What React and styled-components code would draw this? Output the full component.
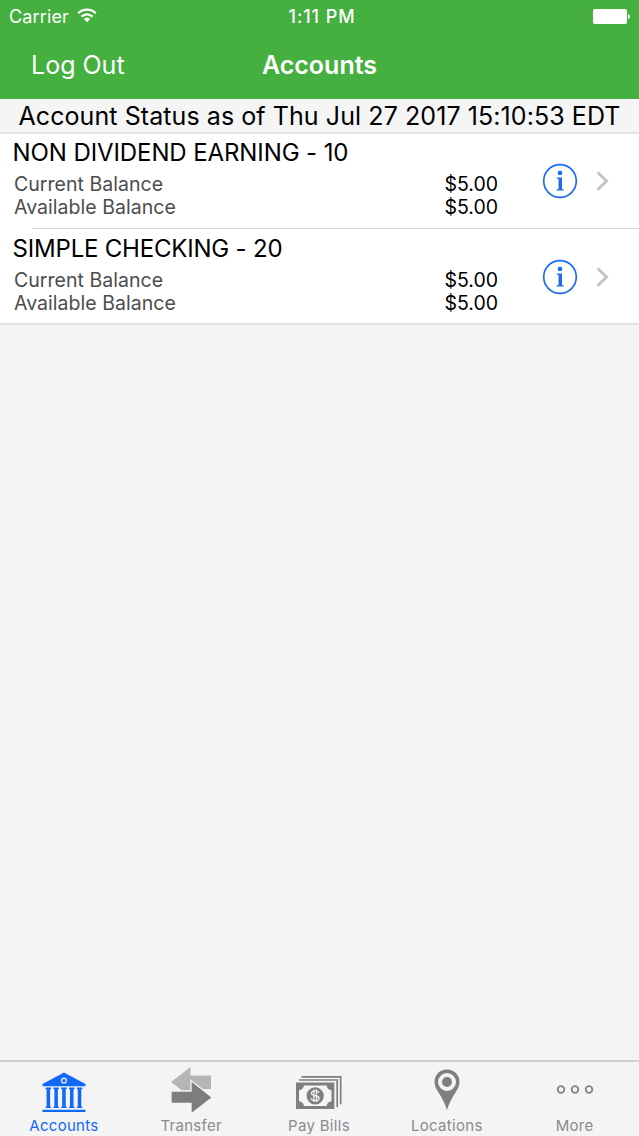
import styled, { createGlobalStyle } from "styled-components";

const GlobalStyle = createGlobalStyle`
  * {
    box-sizing: border-box;
  }
  body {
    margin: 0;
    font-family: Inter, "Liberation Sans", sans-serif;
  }
`;

const Container = styled.div`
  height: 1136px;
  width: 100%;
  display: flex;
  flex-direction: column;
  background-color: #f4f4f4;
  white-space: nowrap;
`;

const Header = styled.header`
  height: 99px;
  flex-shrink: 0;
  background-color: #45af3f;
  color: white;
`;

const StatusBar = styled.div`
  height: 32px;
  display: grid;
  grid-template-columns: 1fr auto 1fr;
  align-items: center;
  padding: 0 9px 0 9px;
  font-size: 18px;
`;

const Carrier = styled.div`
  display: flex;
  align-items: center;
  gap: 8px;
  letter-spacing: 0.15px;

  svg {
    margin-top: -2px;
  }
`;

const Time = styled.div`
  font-weight: 500;
  letter-spacing: 0.9px;
  margin-left: 5px;
`;

const Battery = styled.svg`
  justify-self: end;
`;

const NavBar = styled.div`
  height: 67px;
  display: grid;
  grid-template-columns: 1fr auto 1fr;
  align-items: center;
  padding: 0 31px 1px;
`;

const LogOut = styled.a`
  font-size: 25px;
`;

const Title = styled.h1`
  margin: 0;
  font-size: 25px;
  font-weight: 600;
`;

const AsOf = styled.div`
  height: 35px;
  display: flex;
  align-items: center;
  justify-content: center;
  padding-top: 1px;
  border-bottom: 2px solid #e4e4e5;
  background-color: #f5f5f5;
  font-size: 25px;
  letter-spacing: 0.08px;
`;

const List = styled.div`
  background-color: white;
  border-bottom: 2px solid #e1e1e3;
`;

const Row = styled.div`
  height: 95px;
  display: flex;
  padding: 5px 30px 0 12px;

  &:last-child {
    height: 94px;
    padding-top: 6px;
  }
`;

const Divider = styled.div`
  height: 1px;
  margin: -1px 0 0 32px;
  background-color: #d9d9dc;
`;

const Details = styled.div`
  width: 486px;
`;

const AccountName = styled.div`
  height: 28px;
  line-height: 28px;
  padding-left: 0.6px;
  font-size: 24px;
  letter-spacing: ${(props) => props.$spacing};
`;

const Balance = styled.div`
  display: flex;
  justify-content: space-between;
  padding-left: 2px;
  position: relative;
  top: 6px;
  height: 23px;
  line-height: 23px;
  font-size: 19.5px;
`;

const Label = styled.span`
  color: #4c4c4c;
  letter-spacing: 0.04px;
`;

const Amount = styled.span`
  color: black;
`;

const Actions = styled.div`
  flex: 1;
  height: 83px;
  display: flex;
  align-items: center;
  justify-content: flex-end;
  gap: 18px;
`;

const TabBar = styled.nav`
  height: 76px;
  margin-top: auto;
  display: grid;
  grid-template-columns: repeat(5, 1fr);
  border-top: 2px solid #d0d0d1;
  background-color: #f4f4f5;
`;

const Tab = styled.div`
  display: flex;
  flex-direction: column;
  align-items: center;
  margin-left: ${(props) => (props.$active ? "0" : "-1px")};
  color: ${(props) => (props.$active ? "#1268f5" : "#8b8b8b")};

  svg {
    display: block;
  }
`;

const TabLabel = styled.span`
  height: 18px;
  line-height: 18px;
  margin-top: 3px;
  font-size: 15px;
  letter-spacing: 0.3px;
`;

const WifiIcon = () => (
  <svg width="20" height="15" viewBox="0 0 20 15" fill="none" stroke="white">
    <path d="M1.2 5.2a12.6 12.6 0 0 1 17.6 0" strokeWidth="2.3" />
    <path d="M4.5 8.6a7.9 7.9 0 0 1 11 0" strokeWidth="2.2" />
    <path d="M10 14.2l-3.1-3.3a4.5 4.5 0 0 1 6.2 0z" fill="white" stroke="none" />
  </svg>
);

const InfoIcon = () => (
  <svg width="36" height="36" viewBox="0 0 36 36" fill="#1a6af3">
    <circle cx="18" cy="18" r="16.3" fill="none" stroke="#1a6af3" strokeWidth="1.7" />
    <circle cx="18" cy="10" r="2.3" />
    <path d="M14.7 14.5h5.3v11.6l1.7.5v1h-7.2v-1l2.1-.5V16l-1.9-.5z" />
  </svg>
);

const Chevron = () => (
  <svg width="13" height="20" viewBox="0 0 13 20" fill="none">
    <path d="M1.5 1.2L10.5 10l-9 8.8" stroke="#c3c3c6" strokeWidth="2.9" />
  </svg>
);

const BankIcon = () => (
  <svg width="44" height="52" viewBox="0 0 44 52" fill="#1268f5">
    <path d="M22 10.5L43.5 22v2.3H.5V22z" />
    <circle cx="22" cy="18.7" r="2.4" fill="none" stroke="#d5e3fa" strokeWidth="1.4" />
    {[3.6, 11.4, 19.2, 27, 34.8].map((x) => (
      <path key={x} d={`M${x} 25.600h5.500v1.300l-1 .7v16.800l1 .7V46H${x}v-.9l1-.7V27.600l-1-.7z`} />
    ))}
    <path d="M.5 47.8h43v2.2H.5z" />
  </svg>
);

const TransferIcon = () => (
  <svg width="42" height="52" viewBox="0 0 42 52">
    <path d="M1 20L20.5 5v8.5H41V27H20.5v8z" fill="#b5b5b5" />
    <path d="M1 29h20V18.5L42.5 35.5 21 52V41.5H1z" fill="#7d7d7d" stroke="#f4f4f5" strokeWidth="1.3" />
  </svg>
);

const BillsIcon = () => (
  <svg width="46" height="52" viewBox="0 0 46 52">
    <g fill="none" stroke="#7f7f7f" strokeWidth="1.7">
      <path d="M5.5 14.8h39.2v27.5" />
      <path d="M3 18h38.2v27" />
    </g>
    <path d="M0 20.5h38.3V47H0z" fill="#7f7f7f" />
    <path d="M8 23.6h22.5q.7 4.1 5 4.6v11q-4.3.5-5 4.8H8q-.7-4.3-5-4.8v-11q4.3-.5 5-4.6z" fill="#f5f5f5" />
    <circle cx="19.2" cy="33.8" r="8.6" fill="#7f7f7f" />
    <path
      d="M23 30.8c-.5-1.3-1.8-1.9-3.8-1.9-2.3 0-3.8.9-3.8 2.4 0 3.5 7.7 1.4 7.7 4.9 0 1.6-1.6 2.5-3.9 2.5-2.2 0-3.7-.8-4.1-2.3M17.9 27.5v12.6M20.5 27.5v12.6"
      fill="none"
      stroke="#f1f1f1"
      strokeWidth="1.3"
    />
  </svg>
);

const PinIcon = () => (
  <svg width="26" height="52" viewBox="0 0 26 52">
    <path
      d="M13 7.5C5.8 7.5.5 13 .5 19.8c0 4.3 2.1 7.7 4.6 11.7C8 36.2 11 41 13 48c2-7 5-11.8 7.9-16.5 2.5-4 4.6-7.4 4.6-11.7C25.5 13 20.2 7.5 13 7.5z"
      fill="#7f7f7f"
    />
    <circle cx="13" cy="20" r="7" fill="none" stroke="#f4f4f5" strokeWidth="4" />
  </svg>
);

const MoreIcon = () => (
  <svg width="38" height="52" viewBox="0 0 38 52" fill="none" stroke="#858585" strokeWidth="1.8">
    <circle cx="5" cy="27.5" r="3.3" />
    <circle cx="19" cy="27.5" r="3.3" />
    <circle cx="33" cy="27.5" r="3.3" />
  </svg>
);

const accounts = [
  { name: "NON DIVIDEND EARNING - 10", spacing: "-0.1px", current: "$5.00", available: "$5.00" },
  { name: "SIMPLE CHECKING - 20", spacing: "-0.2px", current: "$5.00", available: "$5.00" },
];

const tabs = [
  { label: "Accounts", Icon: BankIcon, active: true },
  { label: "Transfer", Icon: TransferIcon },
  { label: "Pay Bills", Icon: BillsIcon },
  { label: "Locations", Icon: PinIcon },
  { label: "More", Icon: MoreIcon },
];

function AccountRow({ account }) {
  return (
    <Row>
      <Details>
        <AccountName $spacing={account.spacing}>{account.name}</AccountName>
        <Balance>
          <Label>Current Balance</Label>
          <Amount>{account.current}</Amount>
        </Balance>
        <Balance>
          <Label>Available Balance</Label>
          <Amount>{account.available}</Amount>
        </Balance>
      </Details>
      <Actions>
        <InfoIcon />
        <Chevron />
      </Actions>
    </Row>
  );
}

function App() {
  return (
    <>
      <GlobalStyle />
      <Container>
        <Header>
          <StatusBar>
            <Carrier>
              Carrier
              <WifiIcon />
            </Carrier>
            <Time>1:11 PM</Time>
            <Battery width="38" height="15" viewBox="0 0 38 15" fill="white">
              <rect x="1" y="0" width="34" height="15" rx="2" />
              <path d="M36 5q2 .5 2 2.5t-2 2.5z" />
            </Battery>
          </StatusBar>
          <NavBar>
            <LogOut>Log Out</LogOut>
            <Title>Accounts</Title>
          </NavBar>
        </Header>
        <AsOf>Account Status as of Thu Jul 27 2017 15:10:53 EDT</AsOf>
        <List>
          <AccountRow account={accounts[0]} />
          <Divider />
          <AccountRow account={accounts[1]} />
        </List>
        <TabBar>
          {tabs.map(({ label, Icon, active }) => (
            <Tab key={label} $active={active}>
              <Icon />
              <TabLabel>{label}</TabLabel>
            </Tab>
          ))}
        </TabBar>
      </Container>
    </>
  );
}

export default App;
